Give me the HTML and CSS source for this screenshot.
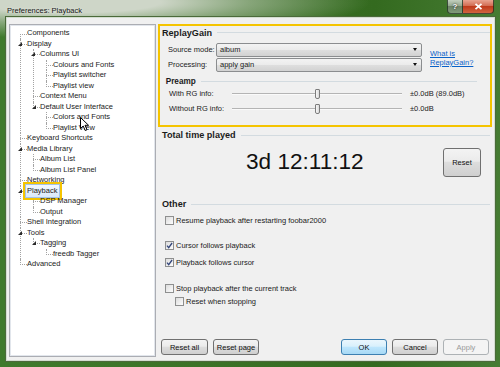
FILE: index.html
```html
<!DOCTYPE html>
<html lang="en">
<head>
    <meta charset="UTF-8">
    <meta name="viewport" content="width=device-width, initial-scale=1.0">
    <title>Preferences: Playback</title>
    <link rel="stylesheet" href="styles.css">
</head>
<body>
    <div class="window">
        <div class="titlebar">
            <span class="title">Preferences: Playback</span>
            <div class="caption">
                <span class="cap-btn help">?</span>
                <span class="cap-btn close">
                    <svg width="9" height="7" viewBox="0 0 9 7"><path d="M1.5 0.8 L7.5 6.2 M7.5 0.8 L1.5 6.2" stroke="#fff" stroke-width="1.8"/></svg>
                </span>
            </div>
        </div>

        <div class="client">
            <div class="tree-box">
                <ul class="tree">
                    <li><div class="row"><span class="conn"></span><span>Components</span></div></li>
                    <li>
                        <div class="row"><span class="conn"><i class="exp"></i></span><span>Display</span></div>
                        <ul>
                            <li>
                                <div class="row"><span class="conn"><i class="exp"></i></span><span>Columns UI</span></div>
                                <ul>
                                    <li><div class="row"><span class="conn"></span><span>Colours and Fonts</span></div></li>
                                    <li><div class="row"><span class="conn"></span><span>Playlist switcher</span></div></li>
                                    <li><div class="row"><span class="conn"></span><span>Playlist view</span></div></li>
                                </ul>
                            </li>
                            <li><div class="row"><span class="conn"></span><span>Context Menu</span></div></li>
                            <li>
                                <div class="row"><span class="conn"><i class="exp"></i></span><span>Default User Interface</span></div>
                                <ul>
                                    <li><div class="row"><span class="conn"></span><span>Colors and Fonts</span></div></li>
                                    <li><div class="row"><span class="conn"></span><span>Playlist View</span></div></li>
                                </ul>
                            </li>
                        </ul>
                    </li>
                    <li><div class="row"><span class="conn"></span><span>Keyboard Shortcuts</span></div></li>
                    <li>
                        <div class="row"><span class="conn"><i class="exp"></i></span><span>Media Library</span></div>
                        <ul>
                            <li><div class="row"><span class="conn"></span><span>Album List</span></div></li>
                            <li><div class="row"><span class="conn"></span><span>Album List Panel</span></div></li>
                        </ul>
                    </li>
                    <li><div class="row"><span class="conn"></span><span>Networking</span></div></li>
                    <li>
                        <div class="row"><span class="conn"><i class="exp"></i></span><span class="sel">Playback</span></div>
                        <ul>
                            <li><div class="row"><span class="conn"></span><span>DSP Manager</span></div></li>
                            <li><div class="row"><span class="conn"></span><span>Output</span></div></li>
                        </ul>
                    </li>
                    <li><div class="row"><span class="conn"></span><span>Shell Integration</span></div></li>
                    <li>
                        <div class="row"><span class="conn"><i class="exp"></i></span><span>Tools</span></div>
                        <ul>
                            <li>
                                <div class="row"><span class="conn"><i class="exp"></i></span><span>Tagging</span></div>
                                <ul>
                                    <li><div class="row"><span class="conn"></span><span>freedb Tagger</span></div></li>
                                </ul>
                            </li>
                        </ul>
                    </li>
                    <li><div class="row"><span class="conn"></span><span>Advanced</span></div></li>
                </ul>
            </div>

            <div class="page">
                <section class="replaygain">
                    <div class="legend">ReplayGain</div>
                    <div class="rg-grid">
                        <span>Source mode:</span>
                        <div class="combo"><span>album</span><i class="arrow"></i></div>
                        <a class="link" href="#">What is<br>ReplayGain?</a>
                        <span>Processing:</span>
                        <div class="combo"><span>apply gain</span><i class="arrow"></i></div>
                    </div>
                    <div class="legend sub">Preamp</div>
                    <div class="preamp">
                        <span>With RG info:</span>
                        <div class="slider"><span class="track"></span><span class="thumb"></span><span class="track"></span></div>
                        <span>±0.0dB (89.0dB)</span>
                        <span>Without RG info:</span>
                        <div class="slider"><span class="track"></span><span class="thumb"></span><span class="track"></span></div>
                        <span>±0.0dB</span>
                    </div>
                </section>

                <div class="legend group">Total time played</div>
                <div class="time-row">
                    <span class="time">3d 12:11:12</span>
                    <button class="btn reset">Reset</button>
                </div>

                <div class="legend group other">Other</div>
                <div class="check first"><span class="box"></span><span>Resume playback after restarting foobar2000</span></div>
                <div class="check gap"><span class="box"><svg width="7" height="7" viewBox="0 0 7 7"><path d="M1 3.6 L2.7 5.6 L6.1 1" fill="none" stroke="#34467a" stroke-width="1.3"/></svg></span><span>Cursor follows playback</span></div>
                <div class="check near"><span class="box"><svg width="7" height="7" viewBox="0 0 7 7"><path d="M1 3.6 L2.7 5.6 L6.1 1" fill="none" stroke="#34467a" stroke-width="1.3"/></svg></span><span>Playback follows cursor</span></div>
                <div class="check gap"><span class="box"></span><span>Stop playback after the current track</span></div>
                <div class="check nested"><span class="box"></span><span>Reset when stopping</span></div>

                <div class="buttons">
                    <button class="btn wide">Reset all</button>
                    <button class="btn">Reset page</button>
                    <span class="spacer"></span>
                    <button class="btn default">OK</button>
                    <button class="btn">Cancel</button>
                    <button class="btn" disabled>Apply</button>
                </div>
            </div>
        </div>

        <svg class="cursor" width="10" height="15" viewBox="0 0 10 15">
            <path d="M0.5 0.5 L0.5 11.5 L3.2 9 L5.2 13.5 L7 12.7 L5 8.3 L8.6 8.3 Z" fill="#fff" stroke="#000" stroke-width="1"/>
        </svg>
    </div>
</body>
</html>
```

FILE: styles.css
```css
:root {
    --line: 1px dotted #a3a3a3;
    --highlight: #f5c400;
    --text: #1b1b1b;
}
* {
    box-sizing: border-box;
}
html, body {
    margin: 0;
    padding: 0;
    width: 100%;
    height: 100%;
    overflow: hidden;
}
body {
    font-family: "Liberation Sans", Arial, sans-serif;
    font-size: 7.5px;
    color: var(--text);
    background:
        radial-gradient(ellipse 300px 36px at 70px 2px, rgba(206, 214, 200, 1) 30%, rgba(186, 200, 178, .6) 60%, rgba(186, 200, 178, 0)),
        linear-gradient(to right, #3f7a2c 0%, #3c7327 40%, #346a1f 75%, #467c33 100%);
}

.window {
    position: relative;
    display: flex;
    flex-direction: column;
    height: 100%;
}

/* title bar */
.titlebar {
    height: 17px;
    display: flex;
    justify-content: space-between;
    align-items: flex-start;
    padding-left: 7px;
}
.title {
    margin-top: 6px;
    line-height: 9px;
    color: #151515;
    text-shadow: 0 0 3px rgba(255, 255, 255, .7);
}
.caption {
    display: flex;
    margin-right: 6px;
}
.cap-btn {
    height: 14px;
    display: flex;
    align-items: center;
    justify-content: center;
    color: #fff;
    font-weight: bold;
    font-size: 8px;
    border: 1px solid rgba(25, 40, 25, .75);
    border-top: none;
    text-shadow: 0 0 2px #000;
}
.help {
    width: 16px;
    border-radius: 0 0 0 4px;
    background: linear-gradient(#c3cfbe, #95a88f 45%, #6e8467 50%, #819a7a);
}
.close {
    width: 31px;
    border-left: none;
    border-radius: 0 0 4px 0;
    background: linear-gradient(#e9a390, #d26c52 45%, #bf3a1b 50%, #d2633f);
}

/* client area */
.client {
    flex: 1;
    margin: 0 5px 6px 6px;
    background: #f0f0f0;
    border: 1px solid #d3ddd0;
    box-shadow: 0 0 0 1px #4b6a3a;
    display: grid;
    grid-template-columns: 147px 1fr;
    column-gap: 2px;
    padding: 6px 2px 3px 2px;
}

/* tree */
.tree-box {
    background: #fff;
    border: 1px solid #abadb3;
    box-shadow: inset 0 0 0 1px #e2e6ec;
    padding: 3px 0 0 10px;
    overflow: hidden;
}
.tree, .tree ul {
    list-style: none;
    margin: 0;
    padding: 0;
}
.tree ul {
    margin-left: 12px;
}
.tree li {
    border-left: var(--line);
}
.tree li:last-child,
.tree > li:first-child {
    border-left-color: transparent;
}
.row {
    display: flex;
    height: 10.5px;
    line-height: 10.5px;
    white-space: nowrap;
}
.conn {
    flex: none;
    width: 7px;
    height: 6px;
    margin-left: -1px;
    border-bottom: var(--line);
}
.tree li:last-child > .row > .conn {
    border-left: var(--line);
}
.tree > li:first-child > .row > .conn {
    align-self: flex-end;
    height: 5px;
    border-bottom: none;
    border-top: var(--line);
    border-left: var(--line);
}
.exp {
    display: block;
    width: 0;
    height: 0;
    margin: 3px 0 0 -2px;
    border-left: 4px solid transparent;
    border-bottom: 4px solid #2b2b2b;
}
.sel {
    align-self: center;
    height: 14px;
    line-height: 12px;
    margin-left: -2px;
    padding: 0 2px 0 1px;
    border: 1px solid #a3c3e8;
    background: linear-gradient(#f2f8fe, #dae9fa);
    outline: 2px solid var(--highlight);
}

/* right page */
.page {
    display: flex;
    flex-direction: column;
    min-width: 0;
    white-space: nowrap;
}
.legend {
    display: flex;
    align-items: center;
    height: 11px;
    font-weight: bold;
    font-size: 9.1px;
}
.legend::after {
    content: "";
    flex: 1;
    margin-left: 5px;
    border-top: 1px solid #d3dbe0;
}
.replaygain {
    height: 103px;
    border: 2px solid var(--highlight);
    padding: 1px 0 0 2px;
}
.rg-grid {
    display: grid;
    grid-template-columns: 48px 206px auto;
    grid-template-rows: 14px 14px;
    row-gap: 1px;
    align-items: center;
    margin: 4.5px 0 0 6px;
}
.combo {
    height: 14px;
    display: flex;
    align-items: center;
    justify-content: space-between;
    padding: 0 4px 0 3px;
    border: 1px solid #8b8d8f;
    border-radius: 2px;
    background: linear-gradient(#f3f3f3, #ebebeb 48%, #dedede 52%, #d2d2d2);
}
.arrow {
    width: 0;
    height: 0;
    border-top: 3px solid #111;
    border-left: 2.5px solid transparent;
    border-right: 2.5px solid transparent;
}
.link {
    grid-column: 3;
    grid-row: 1 / span 2;
    align-self: center;
    margin-left: 8px;
    padding-top: 2px;
    line-height: 9px;
    color: #0a62c9;
}
.legend.sub {
    font-size: 8.2px;
    margin: 4.5px 13px 0 3.7px;
}
.preamp {
    display: grid;
    grid-template-columns: 63px 170px auto;
    grid-template-rows: 13px 13px;
    row-gap: 2px;
    align-items: center;
    margin-left: 7px;
}
.preamp > span:nth-child(3n) {
    margin-left: 8px;
}
.slider {
    display: flex;
    align-items: center;
    height: 13px;
}
.track {
    flex: 1;
    height: 2px;
    border-top: 1px solid #b4b4b4;
    background: #fafafa;
}
.thumb {
    width: 5px;
    height: 10px;
    border: 1px solid #7c7c7c;
    border-radius: 1px 1px 2px 2px;
    background: linear-gradient(90deg, #f7f7f7, #dadada);
}

.legend.group {
    margin: 2.5px 2px 0 4px;
}
.legend.other {
    margin-top: 21.5px;
}
.time-row {
    display: flex;
    align-items: center;
    height: 29px;
    margin-top: 7.5px;
    padding: 0 11px 0 88px;
}
.time {
    font-size: 22.6px;
    line-height: 1;
    color: #111;
}

/* buttons */
.btn {
    font-family: inherit;
    font-size: inherit;
    color: #111;
    width: 46px;
    height: 16px;
    padding: 0;
    border: 1px solid #707070;
    border-radius: 3px;
    background: linear-gradient(#f3f3f3, #ebebeb 45%, #dddddd 50%, #cfcfcf);
}
.btn.reset {
    margin-left: auto;
    width: 38px;
    height: 29px;
}
.btn.wide {
    width: 47px;
}
.btn.default {
    border-color: #3c7fb1;
    background: linear-gradient(#eaf6fd, #d9f0fc 45%, #bee6fd 50%, #a7d9f5);
}
.btn:disabled {
    color: #9a9a9a;
    border-color: #adb2b5;
    background: #f4f4f4;
}
.buttons {
    display: flex;
    gap: 5px;
    margin-top: auto;
    padding: 0 3px 2px 3px;
}
.spacer {
    flex: 1;
}

/* checkboxes */
.check {
    display: flex;
    align-items: center;
    gap: 2px;
    height: 13px;
    margin-left: 7px;
}
.check.first {
    margin-top: 4px;
}
.check.gap {
    margin-top: 12.5px;
}
.check.near {
    margin-top: 4px;
}
.check.nested {
    margin-left: 17px;
}
.box {
    flex: none;
    width: 9px;
    height: 9px;
    display: flex;
    align-items: center;
    justify-content: center;
    border: 1px solid #8e8f8f;
    background: linear-gradient(135deg, #dcdcdc, #fdfdfd);
}

.cursor {
    position: absolute;
    left: 80px;
    top: 117px;
}
```
